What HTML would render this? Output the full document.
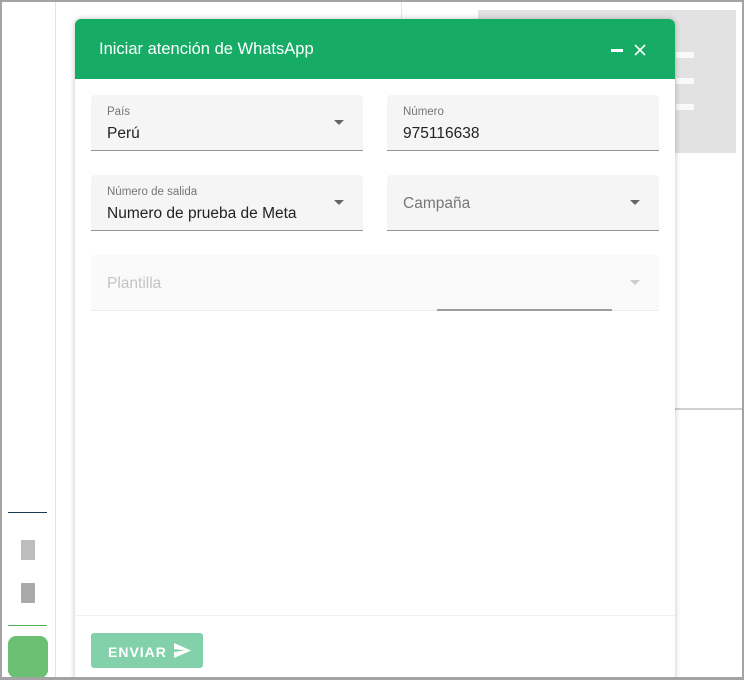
<!DOCTYPE html>
<html><head><meta charset="utf-8"><style>
*{box-sizing:border-box;margin:0;padding:0}
body{width:744px;height:680px;position:relative;overflow:hidden;background:#fff;font-family:"Liberation Sans",sans-serif}
.frame{position:absolute;inset:0;border:2px solid #a3a3a3;border-bottom-width:3px}
.abs{position:absolute}
.dlg{position:absolute;left:75px;top:19px;width:600px;height:661px;background:#fff;border-radius:6px 6px 0 0;box-shadow:0 0 6px rgba(0,0,0,.25)}
.hdr{height:60px;background:#16ac66;border-radius:6px 6px 0 0;color:#fff;font-size:16.5px;padding:21px 0 0 24px;position:relative}
.f{position:absolute;background:#f5f5f5;border-radius:4px 4px 0 0;border-bottom:1px solid #949494;height:56px}
.lbl{position:absolute;left:16px;top:11px;font-size:11.5px;color:#757575}
.val{position:absolute;left:16px;top:30px;font-size:15.5px;color:#222}
.ph{position:absolute;left:16px;top:20px;font-size:15.5px;color:#777}
.arr{position:absolute;right:19px;top:25px;width:0;height:0;border-left:5px solid transparent;border-right:5px solid transparent;border-top:5px solid #666}
</style></head><body>
<div class="abs" style="left:55px;top:0;width:1px;height:680px;background:#e3e3e3"></div>
<div class="abs" style="left:401px;top:0;width:1px;height:408px;background:#e3e3e3"></div>
<div class="abs" style="left:675px;top:408px;width:70px;height:2px;background:#d0d0d0"></div>
<div class="abs" style="left:478px;top:10px;width:258px;height:143px;background:#e2e2e2"></div>
<div class="abs" style="left:676px;top:52px;width:18px;height:6px;background:#fafafa"></div>
<div class="abs" style="left:676px;top:78px;width:18px;height:6px;background:#fafafa"></div>
<div class="abs" style="left:676px;top:104px;width:18px;height:6px;background:#fafafa"></div>
<div class="abs" style="left:8px;top:512px;width:39px;height:1px;background:#1d3a4e"></div>
<div class="abs" style="left:21px;top:540px;width:14px;height:20px;background:#bdbdbd"></div>
<div class="abs" style="left:21px;top:583px;width:14px;height:20px;background:#aaa"></div>
<div class="abs" style="left:8px;top:625px;width:39px;height:1px;background:#4cb14f"></div>
<div class="abs" style="left:8px;top:636px;width:40px;height:42px;background:#6cc074;border-radius:8px"></div>
<div class="dlg">
 <div class="hdr">Iniciar atención de WhatsApp
  <div class="abs" style="left:536px;top:30px;width:12px;height:3px;background:#fff"></div>
  <svg class="abs" style="left:559px;top:25px" width="12" height="12" viewBox="0 0 12 12"><path d="M1 1L11 11M11 1L1 11" stroke="#fff" stroke-width="1.6"/></svg>
 </div>
 <div class="f" style="left:16px;top:76px;width:272px"><div class="lbl">País</div><div class="val">Perú</div><div class="arr"></div></div>
 <div class="f" style="left:312px;top:76px;width:272px"><div class="lbl">Número</div><div class="val">975116638</div></div>
 <div class="f" style="left:16px;top:156px;width:272px"><div class="lbl">Número de salida</div><div class="val">Numero de prueba de Meta</div><div class="arr"></div></div>
 <div class="f" style="left:312px;top:156px;width:272px"><div class="ph">Campaña</div><div class="arr"></div></div>
 <div class="f" style="left:16px;top:236px;width:568px;background:#fafafa;border-bottom-color:#ececec"><div class="ph" style="color:#c4c4c4">Plantilla</div><div class="arr" style="border-top-color:#ccc"></div>
  <div class="abs" style="left:346px;top:54px;width:175px;height:2px;background:#9e9e9e"></div></div>
 <div class="abs" style="left:0;top:596px;width:600px;height:1px;background:#f0f0f0"></div>
 <div class="abs" style="left:16px;top:614px;width:112px;height:35px;background:#82d1ab;border-radius:3px;color:#fff;font-weight:bold;font-size:14px;letter-spacing:1px;padding:11px 0 0 17px">ENVIAR
  <svg class="abs" style="left:83px;top:10px" width="17" height="15" viewBox="0 0 17 15"><path d="M0 0L17 7.5L0 15L0 9L11 7.5L0 6Z" fill="#fff"/></svg></div>
</div>
<div class="frame"></div>
</body></html>
